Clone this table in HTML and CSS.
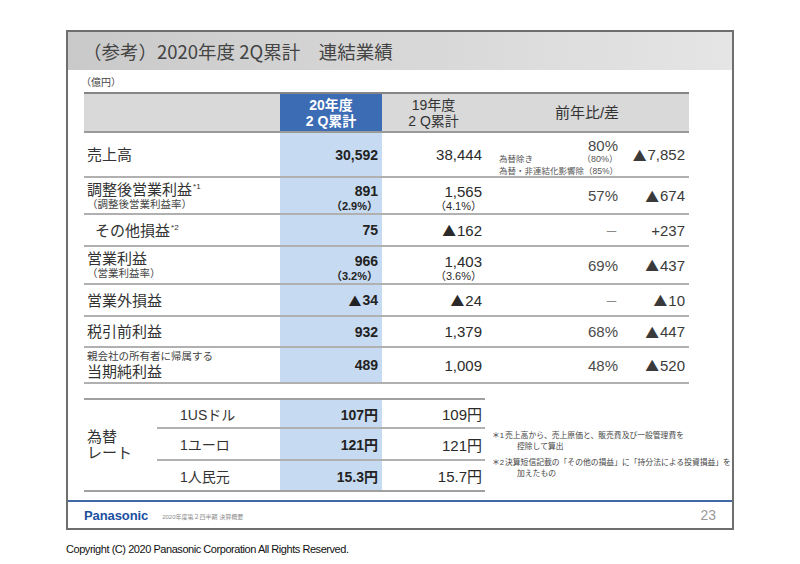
FILE: index.html
```html
<!DOCTYPE html>
<html lang="ja">
<head>
<meta charset="utf-8">
<title>（参考）2020年度 2Q累計 連結業績</title>
<link rel="stylesheet" href="styles.css">
</head>
<body>
<div class="page">
  <div class="slide">
    <div class="title-bar"><h1>（参考）2020年度 2Q累計　連結業績</h1></div>
    <div class="content">
      <div class="unit">（億円）</div>
      <div class="tbl">
        <div class="row head">
          <div class="cell"></div>
          <div class="cell hc cur"><span>20年度</span><span>2 Q累計</span></div>
          <div class="cell hc"><span>19年度</span><span>2 Q累計</span></div>
          <div class="cell hc span2">前年比/差</div>
        </div>
        <div class="row r1">
          <div class="cell lab"><span class="lb">売上高</span></div>
          <div class="cell num c2 cur">30,592</div>
          <div class="cell num c3">38,444</div>
          <div class="cell yoy-stack">
            <div class="yl1">80%</div>
            <div class="yl2"><span>為替除き</span><span>（80%）</span></div>
            <div class="yl3">為替・非連結化影響除（85%）</div>
          </div>
          <div class="cell num c5"><span class="tri">▲</span>7,852</div>
        </div>
        <div class="row r2">
          <div class="cell lab stack-l"><span class="lb">調整後営業利益<sup>*1</sup></span><span class="ls">（調整後営業利益率）</span></div>
          <div class="cell num c2 cur stack-r"><span>891</span><span class="sp">（2.9%）</span></div>
          <div class="cell num c3 stack-r"><span>1,565</span><span class="sp">（4.1%）</span></div>
          <div class="cell num c4">57%</div>
          <div class="cell num c5"><span class="tri">▲</span>674</div>
        </div>
        <div class="row r3">
          <div class="cell lab indent"><span class="lb">その他損益<sup>*2</sup></span></div>
          <div class="cell num c2 cur">75</div>
          <div class="cell num c3"><span class="tri">▲</span>162</div>
          <div class="cell num c4 dash">－</div>
          <div class="cell num c5">+237</div>
        </div>
        <div class="row r4">
          <div class="cell lab stack-l"><span class="lb">営業利益</span><span class="ls">（営業利益率）</span></div>
          <div class="cell num c2 cur stack-r"><span>966</span><span class="sp">（3.2%）</span></div>
          <div class="cell num c3 stack-r"><span>1,403</span><span class="sp">（3.6%）</span></div>
          <div class="cell num c4">69%</div>
          <div class="cell num c5"><span class="tri">▲</span>437</div>
        </div>
        <div class="row r5">
          <div class="cell lab"><span class="lb">営業外損益</span></div>
          <div class="cell num c2 cur"><span class="tri">▲</span>34</div>
          <div class="cell num c3"><span class="tri">▲</span>24</div>
          <div class="cell num c4 dash">－</div>
          <div class="cell num c5"><span class="tri">▲</span>10</div>
        </div>
        <div class="row r6">
          <div class="cell lab"><span class="lb">税引前利益</span></div>
          <div class="cell num c2 cur">932</div>
          <div class="cell num c3">1,379</div>
          <div class="cell num c4">68%</div>
          <div class="cell num c5"><span class="tri">▲</span>447</div>
        </div>
        <div class="row r7">
          <div class="cell lab stack-l"><span class="ls">親会社の所有者に帰属する</span><span class="lb big">当期純利益</span></div>
          <div class="cell num c2 cur">489</div>
          <div class="cell num c3">1,009</div>
          <div class="cell num c4">48%</div>
          <div class="cell num c5"><span class="tri">▲</span>520</div>
        </div>
      </div>
      <div class="lower">
        <div class="fx">
          <div class="fxlab"><span>為替</span><span>レート</span></div>
          <div class="fxn sep">1USドル</div>
          <div class="cell num c2 cur sep">107円</div>
          <div class="cell num c3 sep">109円</div>
          <div class="fxn sep">1ユーロ</div>
          <div class="cell num c2 cur sep">121円</div>
          <div class="cell num c3 sep">121円</div>
          <div class="fxn">1人民元</div>
          <div class="cell num c2 cur">15.3円</div>
          <div class="cell num c3">15.7円</div>
        </div>
        <div class="notes">
          <div class="note"><span class="mk">＊1</span><div class="nt"><div>売上高から、売上原価と、販売費及び一般管理費を</div><div class="l2">控除して算出</div></div></div>
          <div class="note"><span class="mk">＊2</span><div class="nt"><div>決算短信記載の「その他の損益」に「持分法による投資損益」を</div><div class="l2">加えたもの</div></div></div>
        </div>
      </div>
    </div>
    <div class="footer">
      <span class="logo">Panasonic</span>
      <span class="doc">2020年度第２四半期 決算概要</span>
      <span class="pageno">23</span>
    </div>
  </div>
  <p class="copyright">Copyright (C) 2020 Panasonic Corporation All Rights Reserved.</p>
</div>
</body>
</html>
```
FILE: styles.css
```css
* { box-sizing: border-box; }

body {
  margin: 0;
  background: #fff;
  font-family: "Liberation Sans", "Noto Sans CJK JP", sans-serif;
  color: #333;
}

.page { padding: 30px 0 0 66px; }

.slide {
  width: 668px;
  height: 500px;
  border: 2px solid #6e6e6e;
  display: flex;
  flex-direction: column;
}

.title-bar {
  height: 38px;
  flex: none;
  background: linear-gradient(to right, #c9c9c9, #e5e5e5);
  display: flex;
  align-items: center;
  padding-left: 15px;
}

.title-bar h1 {
  margin: 0;
  font-family: "Noto Sans CJK JP", sans-serif;
  font-weight: 400;
  font-size: 18.5px;
  color: #444;
  white-space: nowrap;
}

.content { padding-left: 16px; }

.unit {
  height: 22px;
  padding-top: 7px;
  margin-left: -3px;
  font-size: 10px;
  line-height: 12px;
  color: #444;
}

.tbl { width: 605px; }

.row {
  display: grid;
  grid-template-columns: 196px 102px 103px 140px 64px;
  border-bottom: 2px solid #b0b0b0;
}

.row.head {
  height: 41px;
  border-top: 2px solid #858585;
  border-bottom-color: #9a9a9a;
  background: #d9d9d9;
}
.r1 { height: 45px; }
.r2 { height: 37px; }
.r3 { height: 32px; }
.r4 { height: 38px; }
.r5 { height: 32px; }
.r6 { height: 31px; }
.r7 { height: 36px; }

.cell {
  display: flex;
  align-items: center;
}

.hc {
  flex-direction: column;
  justify-content: center;
  font-size: 14px;
  line-height: 16px;
  color: #333;
}
.hc.span2 {
  grid-column: 4 / 6;
  font-size: 15px;
  flex-direction: row;
  justify-content: center;
}
.head .cur {
  background: #3c6cb4;
  color: #fff;
  font-weight: bold;
}

.lab { padding-left: 3px; }
.lab.indent { padding-left: 11px; }
.lb { font-size: 15px; line-height: 17px; color: #333; }
.lb.big { line-height: 18px; }
.ls { font-size: 10.5px; line-height: 13px; color: #444; }
sup {
  font-size: 8px;
  vertical-align: top;
  position: relative;
  top: -3px;
  margin-left: 1px;
}

.stack-l {
  flex-direction: column;
  align-items: flex-start;
  justify-content: center;
}
.stack-r {
  flex-direction: column;
  align-items: flex-end;
  justify-content: center;
  line-height: 17px;
}
.stack-r .sp { font-size: 11px; line-height: 13px; }

.num {
  justify-content: flex-end;
  font-size: 15px;
  color: #2a2a2a;
}
.c2 { padding-right: 4px; }
.c3 { padding-right: 3px; }
.c4 { padding-right: 7px; color: #4a4a4a; }
.c5 { padding-right: 4px; color: #3a3a3a; }

.tri {
  font-family: "Noto Sans CJK JP", sans-serif;
  font-size: 0.92em;
  font-weight: normal;
  margin-right: 1px;
}

.cur {
  background: #c6daf1;
  font-weight: bold;
  font-size: 14px;
  color: #222;
}

.dash { color: #8a8a8a; font-size: 13px; }

.yoy-stack {
  flex-direction: column;
  align-items: stretch;
  justify-content: flex-start;
  padding: 5px 7px 0 14px;
  color: #555;
}
.yl1 { text-align: right; font-size: 15px; line-height: 15px; color: #4a4a4a; }
.yl2 {
  display: flex;
  justify-content: space-between;
  align-items: flex-end;
  font-size: 8.5px;
  line-height: 13px;
}
.yl2 span:last-child { font-size: 9px; }
.yl3 { text-align: right; font-size: 8.5px; line-height: 10px; white-space: nowrap; }

.lower {
  display: flex;
  margin-top: 14px;
}

.fx {
  width: 401px;
  display: grid;
  grid-template-columns: 73px 123px 102px 103px;
  grid-template-rows: 29px 32px 29px;
  border-top: 2px solid #a0a0a0;
  border-bottom: 2px solid #a0a0a0;
}
.fx .sep { border-bottom: 2px solid #b0b0b0; }
.fxlab {
  grid-row: 1 / 4;
  grid-column: 1;
  display: flex;
  flex-direction: column;
  justify-content: center;
  padding-left: 3px;
  font-size: 15px;
  line-height: 16px;
  color: #333;
}
.fxn {
  display: flex;
  align-items: center;
  padding-left: 23px;
  font-size: 14px;
  color: #333;
}

.notes {
  padding: 32px 0 0 7px;
  font-size: 7.8px;
  line-height: 11px;
  color: #444;
  white-space: nowrap;
}
.note { display: flex; }
.note + .note { margin-top: 5px; }
.mk { width: 13px; flex: none; }
.l2 { padding-left: 12px; }

.footer {
  margin-top: auto;
  height: 28px;
  flex: none;
  border-top: 2px solid #3f6aa6;
  display: flex;
  align-items: center;
  padding: 0 16px;
}
.logo {
  font-family: "Liberation Sans", sans-serif;
  font-weight: bold;
  font-size: 13px;
  color: #1b4f9f;
  letter-spacing: -0.1px;
}
.doc {
  margin-left: 14px;
  font-size: 6px;
  color: #8a8a8a;
  padding-top: 2px;
}
.pageno {
  margin-left: auto;
  font-size: 14px;
  color: #9a9a9a;
}

.copyright {
  margin: 13px 0 0;
  font-size: 11px;
  line-height: 12px;
  letter-spacing: -0.45px;
  color: #111;
}
```
